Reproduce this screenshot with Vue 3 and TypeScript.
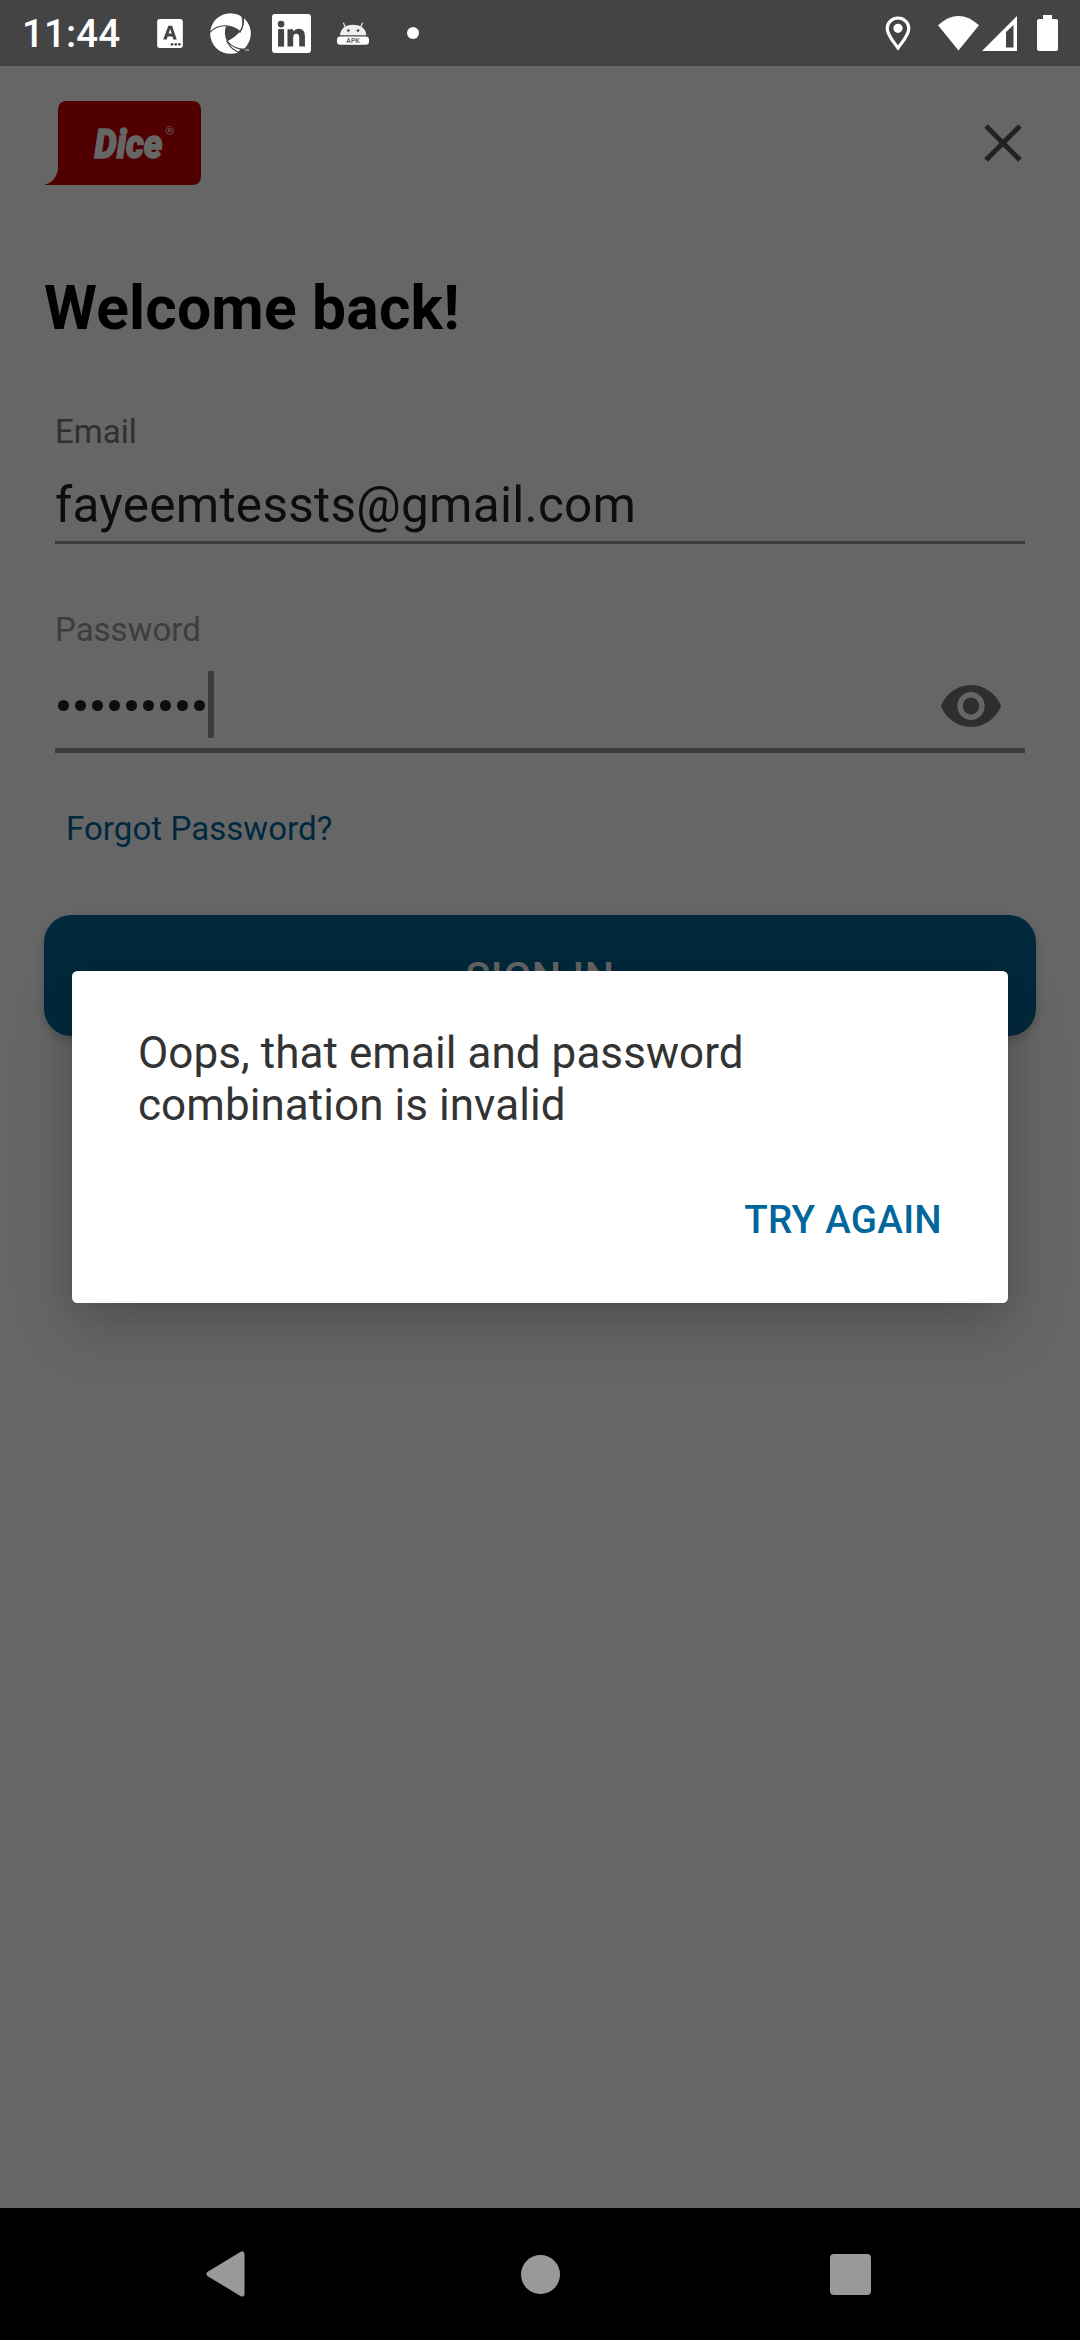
<script setup lang="ts">
import { ref } from 'vue'

const email = ref('fayeemtessts@gmail.com')
const passwordLength = ref(9)
</script>

<template>
  <div class="screen">
    <header class="status">
      <span class="time">11:44</span>
      <svg class="st st-a" viewBox="470 57 76 86" width="26" height="29">
        <path fill="#fff" fill-rule="evenodd" d="M478 57H538Q546 57 546 65V135Q546 143 538 143H478Q470 143 470 135V65Q470 57 478 57ZM503 77H514L528 118H518L515 109H501L498 118H488ZM504 100H513L508.500 86Z" />
        <g fill="#444"><circle cx="514" cy="132" r="4" /><circle cx="525" cy="132" r="4" /><circle cx="536" cy="132" r="4" /></g>
      </svg>
      <svg class="st st-swirl" viewBox="629 38 124 124" width="41" height="41">
        <circle cx="691" cy="100" r="61.500" fill="#fff" />
        <path fill="#444" d="M677 79Q699 76 721 94Q703 113 681 124Q669 103 677 79Z" />
        <g fill="none" stroke="#444" stroke-width="3.500">
          <path d="M628 97Q650 74 680 77Q702 80 721 95" />
          <path d="M719 97Q736 72 723 41" />
          <path d="M679 122Q694 152 722 158" />
          <path d="M681 124Q704 150 742 149" />
          <path d="M719 96Q733 76 730 51" />
        </g>
        <path d="M722 146H756V166H708Z" fill="#444" />
        <path d="M736 150H747" stroke="#ddd" stroke-width="4" stroke-dasharray="4 2" />
      </svg>
      <svg class="st st-in" viewBox="817 42 116 116" width="39" height="39">
        <rect x="817" y="42" width="116" height="116" rx="9" fill="#fff" />
        <g fill="#444">
          <circle cx="844" cy="72" r="10" />
          <rect x="835" y="87" width="18" height="52" />
          <path d="M863 87H880V94Q886 86 897 86Q915 86 915 109V139H898V113Q898 101 889 101Q880 101 880 113V139H863Z" />
        </g>
      </svg>
      <svg class="st st-apk" viewBox="1010 65 96 68" width="32" height="23">
        <path d="M1019 104Q1022 74 1058 73Q1095 74 1098 104Z" fill="#eee" />
        <path d="M1036 82L1029 67M1080 82L1087 67" stroke="#ddd" stroke-width="4" />
        <circle cx="1044" cy="90" r="4" fill="#444" /><circle cx="1073" cy="90" r="4" fill="#444" />
        <rect x="1010" y="108" width="96" height="25" rx="10" fill="#fff" />
        <text x="1038" y="128" class="apk" textLength="40" lengthAdjust="spacingAndGlyphs">APK</text>
      </svg>
      <span class="dot"></span>
      <span class="grow"></span>
      <svg class="st" viewBox="0 0 26 35" width="26" height="35">
        <path d="M13 2C7 2 2.200 6.600 2.200 12.500C2.200 19 8 25 13 32C18 25 23.800 19 23.800 12.500C23.800 6.600 19 2 13 2Z" fill="none" stroke="#fff" stroke-width="3.200" />
        <circle cx="13" cy="12.300" r="4.600" fill="#fff" />
      </svg>
      <svg class="st st-wifi" viewBox="0 0 41 35" width="41" height="35"><path d="M0 9.300Q20.500-9.200 41 9.300L20.500 34.500Z" fill="#fff" /></svg>
      <svg class="st st-cell" viewBox="0 0 35 35" width="35" height="35"><path fill="#fff" fill-rule="evenodd" d="M35 0V35H0ZM31.500 9L24 16V31.500H31.500Z" /></svg>
      <svg class="st st-bat" viewBox="0 0 21 36" width="21" height="36"><path fill="#fff" d="M6 0H15V4H19Q21 4 21 6V34Q21 36 19 36H2Q0 36 0 34V6Q0 4 2 4H6Z" /></svg>
    </header>

    <main class="page">
      <div class="topbar">
        <svg class="logo" viewBox="44 101 158 84" width="158" height="84">
          <path fill="#500000" d="M67 101H192Q201 101 201 110V176Q201 185 192 185H44Q55 183 58 170V110Q58 101 67 101Z" />
          <text x="94.500" y="158" class="dice" textLength="68" lengthAdjust="spacingAndGlyphs">Dice</text>
          <text x="165.500" y="134.500" class="reg">®</text>
        </svg>
        <svg class="close" viewBox="0 0 38 38" width="38" height="38"><path d="M2 2L36 36M36 2L2 36" stroke="#222" stroke-width="5" /></svg>
      </div>

      <h1>Welcome back!</h1>

      <section class="field field-email">
        <label>Email</label>
        <div class="value"><span>{{ email }}</span></div>
      </section>

      <section class="field field-pass">
        <label>Password</label>
        <div class="secret">
          <i v-for="n in passwordLength" :key="n" class="bullet"></i>
          <b class="caret"></b>
          <svg class="eye" viewBox="1 4.500 22 15" width="60" height="42" preserveAspectRatio="none">
            <path fill="#2e2e2e" d="M12 4.500C7 4.500 2.730 7.610 1 12c1.730 4.390 6 7.500 11 7.500s9.270-3.110 11-7.500c-1.730-4.390-6-7.500-11-7.500zM12 17c-2.760 0-5-2.240-5-5s2.240-5 5-5 5 2.240 5 5-2.240 5-5 5zm0-8c-1.660 0-3 1.340-3 3s1.340 3 3 3 3-1.340 3-3-1.340-3-3-3z" />
          </svg>
        </div>
      </section>

      <a class="forgot">Forgot Password?</a>
      <button class="signin">SIGN IN</button>
    </main>

    <nav class="navbar">
      <svg viewBox="0 0 40 46" width="40" height="46"><path d="M36 3V43L3 23Z" fill="#999" stroke="#999" stroke-width="5" stroke-linejoin="round" /></svg>
      <span class="home"></span>
      <span class="recent"></span>
    </nav>

    <div class="dialog" role="alertdialog">
      <p>Oops, that email and password<br />combination is invalid</p>
      <button class="again">TRY AGAIN</button>
    </div>
  </div>
</template>

<style>
body { margin: 0; background: #666; }
</style>

<style scoped>
.screen {
  position: relative;
  display: flex;
  flex-direction: column;
  width: 1080px;
  height: 2340px;
  overflow: hidden;
  background: #666;
  font-family: Roboto, "Noto Sans", sans-serif;
}
svg { display: block; flex: none; }
button { border: 0; padding: 0; font-family: inherit; }

.status {
  display: flex;
  align-items: center;
  box-sizing: border-box;
  height: 66px;
  padding: 0 22px 0 22px;
  background: #444;
  color: #fff;
}
.time { width: 135px; padding-top: 2px; font-size: 38.500px; font-weight: 500; line-height: 64px; letter-spacing: 0.1px; }
.st-swirl { margin-left: 27px; }
.st-in { margin-left: 21px; }
.st-apk { margin-left: 26px; }
.apk { font: 700 20px Roboto, sans-serif; fill: #666; }
.dot { width: 12px; height: 12px; margin-left: 38px; border-radius: 50%; background: #fff; }
.grow { flex: 1; }
.st-wifi { margin-left: 27px; }
.st-cell { margin-left: 3px; }
.st-bat { margin-left: 20px; }

.page { display: flex; flex: 1; flex-direction: column; padding: 35px 44px 0; }
.topbar { display: flex; align-items: center; justify-content: space-between; height: 84px; padding-right: 14px; }
.dice { font: italic 900 41px Roboto, sans-serif; fill: #666; stroke: #666; stroke-width: 1.600; }
.reg { font: 11px Roboto, sans-serif; fill: #666; }

h1 { margin: 88px 0 0; font-size: 60.500px; line-height: 71px; font-weight: 700; letter-spacing: 0.2px; color: #000; }

.field { display: flex; flex-direction: column; margin: 0 11px; }
.field label { font-size: 33px; line-height: 39px; }
.field-email { margin-top: 68px; }
.field-email label { color: #303030; }
.value { height: 65px; margin-top: 25px; border-bottom: 3px solid #3d3d3d; font-size: 49.500px; line-height: 58px; letter-spacing: 0.27px; color: #0d0d0d; }
.field-pass { margin-top: 66px; }
.field-pass label { color: #3d3d3d; }
.secret { display: flex; align-items: center; gap: 6px; height: 67px; margin-top: 22px; padding: 0 24px 10px 3px; border-bottom: 5px solid #3d3d3d; }
.bullet { width: 11px; height: 11px; margin-top: 2px; border-radius: 50%; background: #0d0d0d; }
.caret { width: 6px; height: 67px; margin-left: -3px; background: #3d3d3d; }
.eye { margin-top: 2px; margin-left: auto; }

.forgot { margin: 56px 0 0 22px; font-size: 33px; line-height: 39px; letter-spacing: 0.07px; color: #00293e; }
.signin {
  height: 121px;
  margin-top: 67px;
  padding-top: 2px;
  border-radius: 27.500px;
  background: #00293c;
  box-shadow: 0 4px 8px rgba(0, 0, 0, 0.22);
  color: #666;
  font-size: 41.250px;
  font-weight: 500;
  letter-spacing: 0.600px;
}

.navbar { display: flex; align-items: center; height: 132px; padding-left: 206px; background: #000; }
.home { width: 39px; height: 39px; margin-left: 275px; border-radius: 50%; background: #999; }
.recent { width: 41px; height: 41px; margin-left: 270px; border-radius: 4px; background: #999; }

.dialog {
  position: absolute;
  top: 971px;
  left: 72px;
  display: flex;
  flex-direction: column;
  align-items: flex-end;
  box-sizing: border-box;
  width: 936px;
  height: 332px;
  padding: 56px 66px 0 66px;
  border-radius: 5.500px;
  background: #fff;
  box-shadow: 0 24px 60px rgba(0, 0, 0, 0.2), 0 0 28px rgba(0, 0, 0, 0.08);
}
.dialog p { align-self: stretch; margin: 0; font-size: 44px; line-height: 52px; letter-spacing: 0.06px; color: #333; }
.again { margin-top: 66px; background: none; font-size: 38.500px; font-weight: 500; line-height: 45px; letter-spacing: 0.3px; color: #00669b; }
</style>
